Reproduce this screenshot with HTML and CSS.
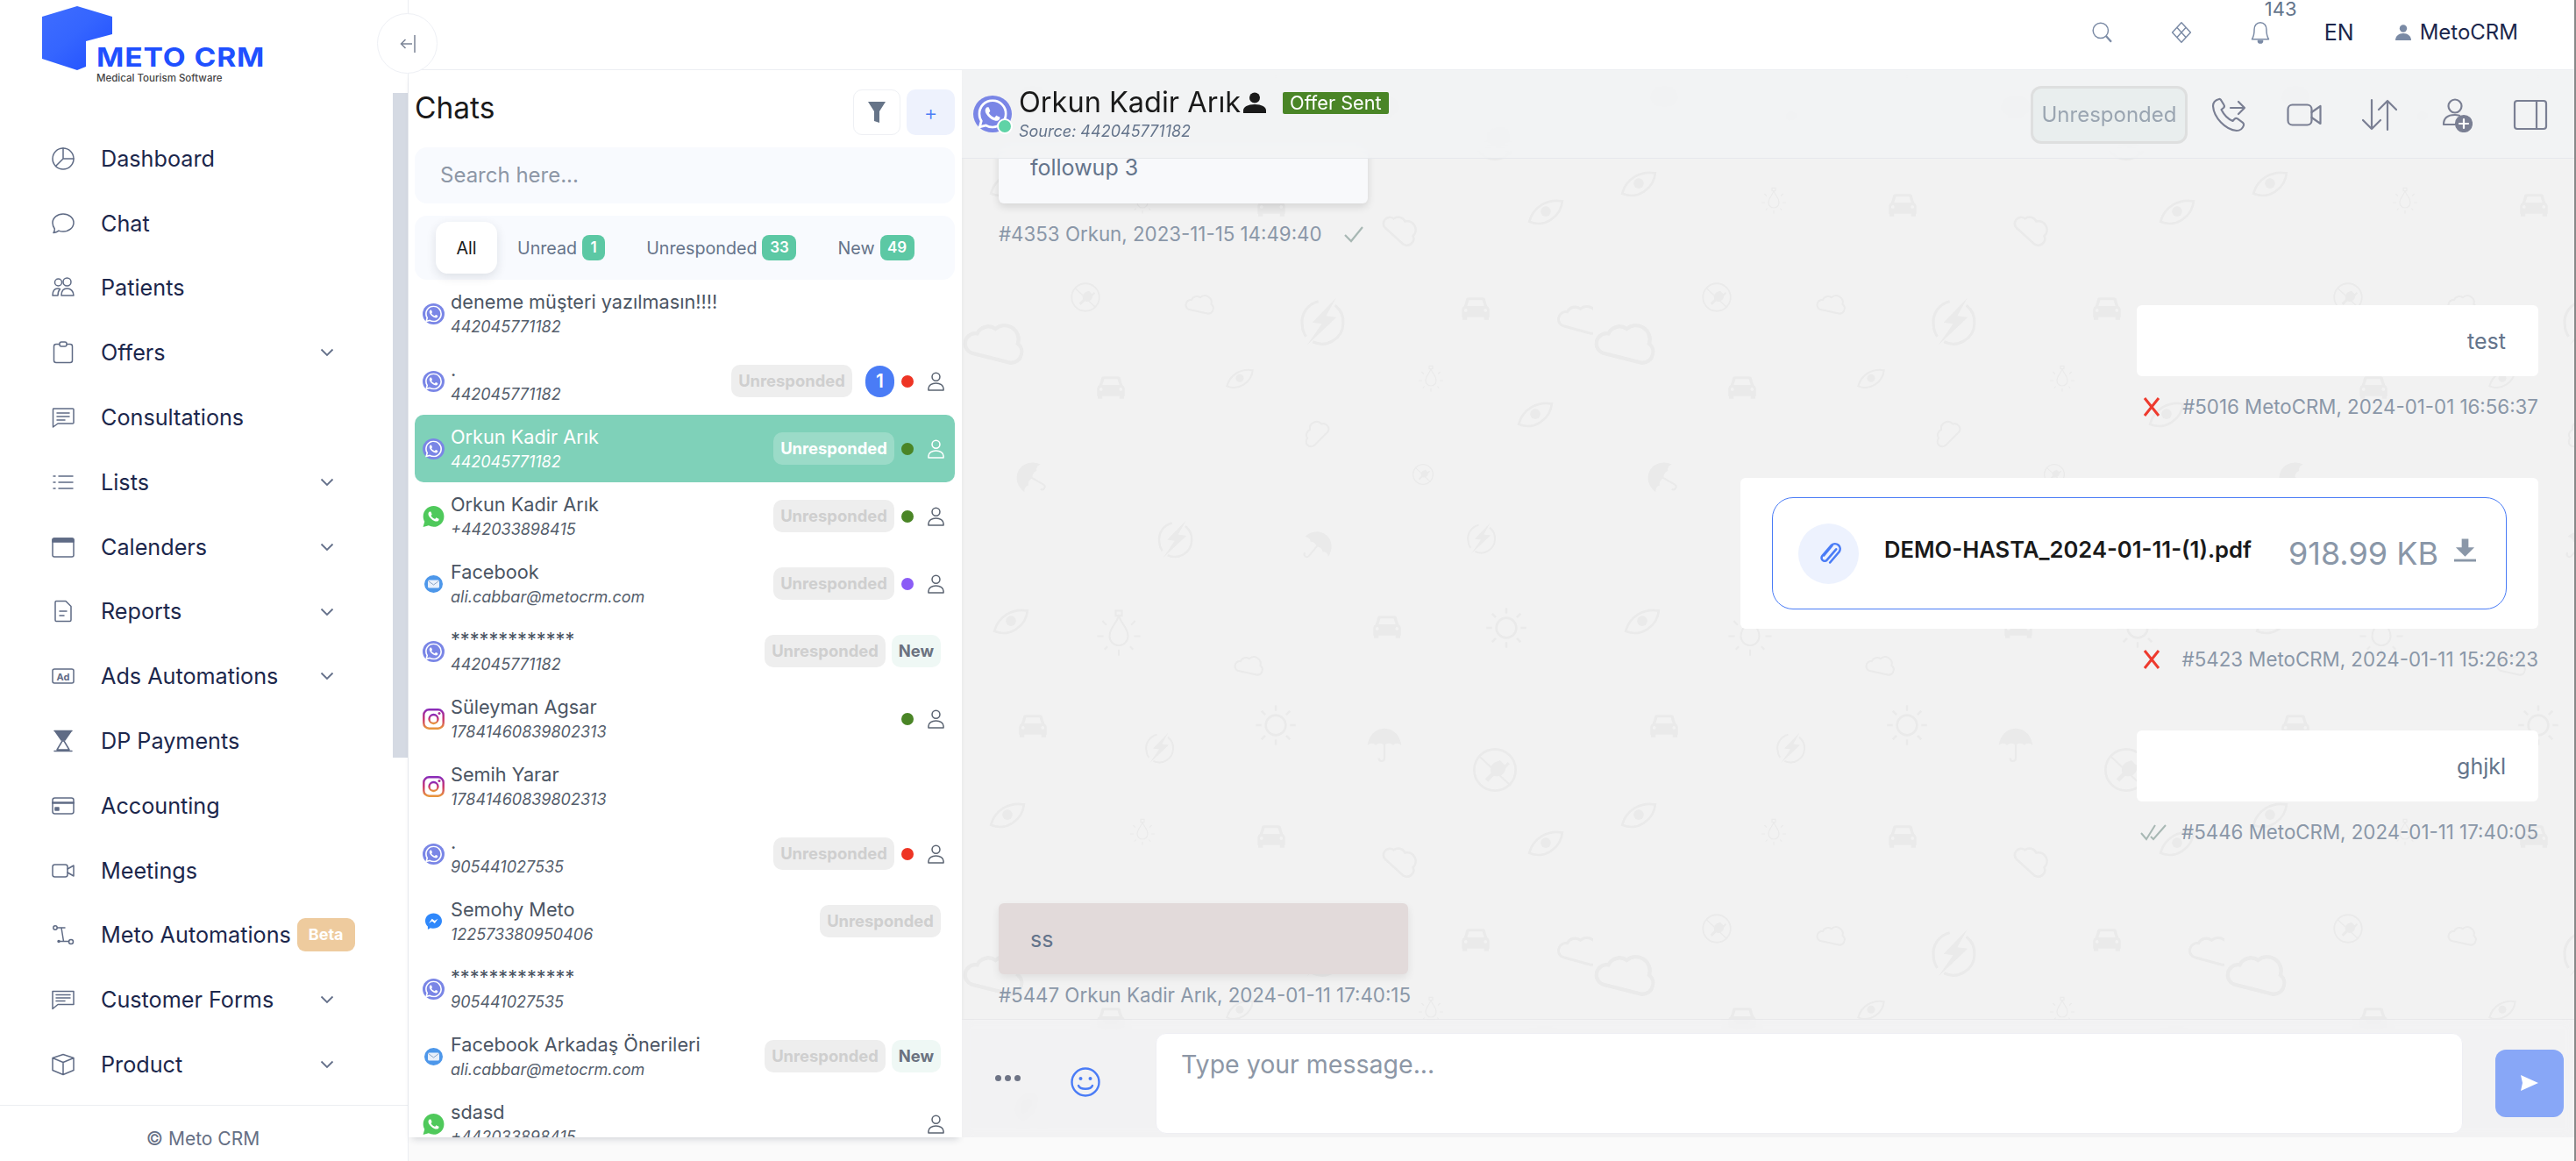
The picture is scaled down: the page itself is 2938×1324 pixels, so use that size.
FILE: index.html
```html
<!DOCTYPE html>
<html lang="en">
<head>
<meta charset="utf-8">
<title>Meto CRM</title>
<link rel="stylesheet" href="styles.css">
</head>
<body>
<svg class="defs" aria-hidden="true">
  <defs>
    <linearGradient id="cubeGrad" x1="0" y1="0" x2="1" y2="1"><stop offset="0" stop-color="#3f6dff"/><stop offset=".45" stop-color="#3565ff"/><stop offset="1" stop-color="#1f4dff"/></linearGradient>
    <linearGradient id="igGrad" x1="0" y1="0" x2="0" y2="1"><stop offset="0" stop-color="#8a2bb8"/><stop offset=".5" stop-color="#c9316e"/><stop offset="1" stop-color="#e8953c"/></linearGradient>
    <symbol id="wa-phone" viewBox="0 0 24 24"><path d="M17.472 14.382c-.297-.149-1.758-.867-2.03-.967-.273-.099-.471-.148-.67.15-.197.297-.767.966-.94 1.164-.173.199-.347.223-.644.075-.297-.15-1.255-.463-2.39-1.475-.883-.788-1.48-1.761-1.653-2.059-.173-.297-.018-.458.13-.606.134-.133.298-.347.446-.52.149-.174.198-.298.298-.497.099-.198.05-.371-.025-.52-.075-.149-.669-1.612-.916-2.207-.242-.579-.487-.5-.669-.51-.173-.008-.371-.01-.57-.01-.198 0-.52.074-.792.372-.272.297-1.04 1.016-1.04 2.479 0 1.462 1.065 2.875 1.213 3.074.149.198 2.096 3.2 5.077 4.487.709.306 1.262.489 1.694.625.712.227 1.36.195 1.871.118.571-.085 1.758-.719 2.006-1.413.248-.694.248-1.289.173-1.413-.074-.124-.272-.198-.57-.347"/></symbol>
    <symbol id="wa-ring" viewBox="0 0 24 24"><path d="M12.051 21.785h-.004a9.87 9.87 0 01-5.031-1.378l-.361-.214-3.741.982.998-3.648-.235-.374a9.86 9.86 0 01-1.51-5.26c.001-5.45 4.436-9.884 9.888-9.884 2.64 0 5.122 1.03 6.988 2.898a9.825 9.825 0 012.893 6.994c-.003 5.45-4.437 9.884-9.885 9.884m8.413-18.297A11.815 11.815 0 0012.05 0C5.495 0 .16 5.335.157 11.892c0 2.096.547 4.142 1.588 5.945L.057 24l6.305-1.654a11.882 11.882 0 005.683 1.448h.005c6.554 0 11.89-5.335 11.893-11.893a11.821 11.821 0 00-3.48-8.413z"/></symbol>
    <symbol id="ch-viber" viewBox="0 0 25 24"><ellipse cx="12.500" cy="12" rx="12.500" ry="12" fill="#7a86e6"/><use href="#wa-ring" x="3" y="2.500" width="19" height="19" fill="#fff"/><use href="#wa-phone" x="3" y="2.500" width="19" height="19" fill="#fff"/></symbol>
    <symbol id="ch-whats" viewBox="0 0 24 24"><path fill="#4fc95b" d="M12.050 0C5.500 0 .16 5.340.16 11.890c0 2.100.55 4.140 1.590 5.950L.06 24l6.300-1.650a11.880 11.880 0 005.690 1.450c6.550 0 11.890-5.340 11.890-11.900C23.940 5.340 18.600 0 12.050 0z"/><use href="#wa-phone" width="24" height="24" fill="#fff"/></symbol>
    <symbol id="ch-mail" viewBox="0 0 25 24"><ellipse cx="12.500" cy="12" rx="10.500" ry="10" fill="#4d97ea"/><rect x="6" y="7.500" width="13" height="9" rx="1.500" fill="#e8f0fb"/><path d="M6.500 8.500l6 4.500 6-4.500" fill="none" stroke="#8ea6c6" stroke-width="1"/></symbol>
    <symbol id="ch-ig" viewBox="0 0 25 24"><rect x="1.300" y="1.300" width="22.400" height="21.400" rx="6" fill="none" stroke="url(#igGrad)" stroke-width="2.400"/><circle cx="12.500" cy="12" r="5" fill="none" stroke="url(#igGrad)" stroke-width="2.300"/><circle cx="19" cy="5.500" r="1.500" fill="#a72b96"/></symbol>
    <symbol id="ch-msg" viewBox="0 0 24 24"><path fill="#2f88fb" d="M12 2.500C6.500 2.500 2.500 6.400 2.500 11.300c0 2.600 1.100 4.800 2.900 6.300v3.300l3.100-1.700c1.100.4 2.300.6 3.500.6 5.500 0 9.500-3.900 9.500-8.500S17.500 2.500 12 2.500z"/><path fill="#fff" d="M6.500 14l3.700-5.300 3 2.400 3.800-2.400-3.700 5.300-3-2.400z"/></symbol>
    <symbol id="ic-person" viewBox="0 0 20 24"><circle cx="10" cy="6.500" r="4.700" fill="none" stroke="currentColor" stroke-width="1.600"/><path d="M1 22.500v-2c0-4 4-6.500 9-6.500s9 2.500 9 6.500v2z" fill="none" stroke="currentColor" stroke-width="1.600" stroke-linejoin="round"/></symbol>
    <symbol id="ic-chev" viewBox="0 0 16 10"><path d="M1.500 1.500L8 8l6.500-6.500" fill="none" stroke="#64708a" stroke-width="1.800"/></symbol>
    <symbol id="ic-x" viewBox="0 0 20 22"><path d="M2 1l16 20M18 1L2 21" fill="none" stroke="#ee3a2e" stroke-width="3"/></symbol>
    <symbol id="d-car" viewBox="0 0 48 48"><path fill-rule="evenodd" d="M13 7h22c2 0 3 1 3.500 2.500L41.500 20c2 1 3.500 3 3.500 6v11h-1v4h-7v-4H11v4H4v-4H3V26c0-3 1.500-5 3.500-6l3-10.500C10 8 11 7 13 7zm1 4l-3 9h26l-3-9zM9 24a2.500 2.500 0 100 5 2.500 2.500 0 000-5zm30 0a2.500 2.500 0 100 5 2.500 2.500 0 000-5z"/></symbol>
    <symbol id="d-eye" viewBox="0 0 48 40"><path d="M3 32C8 13 26 3 45 6 43 26 22 40 3 32z" fill="none" stroke="currentColor" stroke-width="3"/><circle cx="24" cy="19" r="6.500"/></symbol>
    <symbol id="d-cloud" viewBox="0 0 48 40"><path d="M10 35a8 8 0 01-1-16 9.500 9.500 0 0113-7 11 11 0 0120 7 8.500 8.500 0 01-2 16z" fill="none" stroke="currentColor" stroke-width="3"/></symbol>
    <symbol id="d-sun" viewBox="0 0 48 48"><circle cx="24" cy="24" r="10.500" fill="none" stroke="currentColor" stroke-width="2.400"/><path d="M24 3v6M24 39v6M3 24h6M39 24h6M9 9l4 4M35 35l4 4M39 9l-4 4M13 35l-4 4" fill="none" stroke="currentColor" stroke-width="2.400"/></symbol>
    <symbol id="d-bulb" viewBox="0 0 48 48"><path d="M24 6c1 8 9 12 9 21a9 9 0 01-18 0c0-9 8-13 9-21z" fill="none" stroke="currentColor" stroke-width="1.800"/><path d="M21 2h6v5h-6zM3 27h6M39 27h6M8 12l4 4M40 12l-4 4M10 40l3-3M38 40l-3-3M24 40v6" fill="none" stroke="currentColor" stroke-width="1.800"/></symbol>
    <symbol id="d-bolt" viewBox="0 0 48 48"><path d="M17 5.500A20 20 0 005 30a20 20 0 005 10M33 7a20 20 0 0110 16 20 20 0 01-26 21" fill="none" stroke="currentColor" stroke-width="2.600"/><path d="M33 0L14 26h9L12 48l24-30h-10z"/></symbol>
    <symbol id="d-plug" viewBox="0 0 48 48"><circle cx="24" cy="24" r="21" fill="none" stroke="currentColor" stroke-width="2.400"/><path d="M8 10l32 30" stroke="currentColor" stroke-width="2"/><path d="M29 14l5 5 3-3 2 2-4 4a9 9 0 01-12 8l-6 6-3-3 6-6a9 9 0 018-12z"/></symbol>
    <symbol id="d-umb" viewBox="0 0 48 48"><path d="M24 4C12 4 4 14 3 25c3-3 8-3 10 0 3-3 8-3 11 0 3-3 8-3 11 0 2-3 7-3 10 0C44 14 36 4 24 4z"/><path d="M24 24v17c0 5-7 5-7 0" fill="none" stroke="currentColor" stroke-width="2.400"/></symbol>
    <pattern id="doodlePattern" width="720" height="720" patternUnits="userSpaceOnUse">
      <g fill="#eaeaea" color="#eaeaea">
        <use href="#d-plug" x="123" y="241" width="36" height="36"/>
        <use href="#d-cloud" x="255" y="251" width="34" height="28" transform="rotate(12 272 265)"/>
        <use href="#d-bolt" x="383" y="258" width="58" height="58" transform="rotate(8 412 287)"/>
        <use href="#d-car" x="568" y="254" width="36" height="36"/>
        <use href="#d-cloud" x="680" y="260" width="50" height="42" transform="rotate(15 706 282)"/>
        <use href="#d-cloud" x="3" y="278" width="70" height="58" transform="rotate(14 38 308)"/>
        <use href="#d-car" x="152" y="344" width="36" height="36"/>
        <use href="#d-eye" x="300" y="338" width="34" height="28"/>
        <use href="#d-bulb" x="519" y="336" width="32" height="32"/>
        <use href="#d-eye" x="632" y="375" width="44" height="36"/>
        <use href="#d-cloud" x="385" y="399" width="34" height="28" transform="rotate(-45 402 413)"/>
        <use href="#d-umb" x="59" y="444" width="42" height="42" transform="rotate(-60 80 465)"/>
        <use href="#d-plug" x="513" y="448" width="26" height="26"/>
        <use href="#d-bolt" x="221" y="512" width="46" height="46" transform="rotate(8 244 535)"/>
        <use href="#d-umb" x="385" y="523" width="40" height="40" transform="rotate(40 405 543)"/>
        <use href="#d-bolt" x="574" y="515" width="38" height="38" transform="rotate(8 593 534)"/>
        <use href="#d-eye" x="34" y="611" width="44" height="36"/>
        <use href="#d-bulb" x="151" y="614" width="56" height="56"/>
        <use href="#d-car" x="467" y="617" width="36" height="36"/>
        <use href="#d-sun" x="595" y="610" width="52" height="52"/>
        <use href="#d-cloud" x="311" y="663" width="34" height="28" transform="rotate(12 328 677)"/>
        <use href="#d-car" x="63" y="10" width="36" height="36"/>
        <use href="#d-bolt" x="207" y="34" width="38" height="38" transform="rotate(8 226 53)"/>
        <use href="#d-sun" x="332" y="1" width="52" height="52"/>
        <use href="#d-umb" x="460" y="27" width="44" height="44"/>
        <use href="#d-plug" x="581" y="51" width="54" height="54"/>
        <use href="#d-eye" x="30" y="112" width="44" height="36"/>
        <use href="#d-bulb" x="190" y="133" width="32" height="32"/>
        <use href="#d-car" x="335" y="136" width="36" height="36"/>
        <use href="#d-cloud" x="480" y="161" width="44" height="36" transform="rotate(42 502 179)"/>
        <use href="#d-eye" x="644" y="144" width="44" height="36"/>
      </g>
    </pattern>
  </defs>
</svg>

<div class="app">
  <aside class="sidebar">
    <div class="logo">
      <svg class="logo-cube" viewBox="0 0 80 73"><path fill="url(#cubeGrad)" d="M0 12L40 0l40 12v20l-30 8v29l-10 4L0 60z"/></svg>
      <div class="logo-text">
        <div class="logo-name">METO CRM</div>
        <div class="logo-sub">Medical Tourism Software</div>
      </div>
    </div>
    <nav class="nav">
      <a class="nav-item"><svg class="nav-ic" viewBox="0 0 26 26"><circle cx="13" cy="13" r="12"/><path d="M13 1v12h12M13 13l-8.500 8.500"/></svg><span>Dashboard</span></a>
      <a class="nav-item"><svg class="nav-ic" viewBox="0 0 26 26"><path d="M13 2c6.600 0 12 4.300 12 10s-5.400 10-12 10c-1.800 0-3.500-.3-5-.9-1.600 1.300-3.500 2.300-6 2.400 1-1.500 1.400-3 1.300-4.500C1.900 17 1 14.700 1 12 1 6.300 6.400 2 13 2z"/></svg><span>Chat</span></a>
      <a class="nav-item"><svg class="nav-ic" viewBox="0 0 26 26"><circle cx="7.500" cy="7" r="4"/><circle cx="17.500" cy="6.500" r="4.500"/><path d="M1 22c0-5 2-8 6-8 1 0 2 .2 2.500.6C7.500 16.500 7 19 7 22zM11 22c0-5 2.500-8 6.500-8s7.500 3 7.500 8z"/></svg><span>Patients</span></a>
      <a class="nav-item has-sub"><svg class="nav-ic" viewBox="0 0 26 26"><rect x="2.500" y="3.500" width="21" height="21" rx="2.500"/><rect x="9" y="1" width="8" height="5" rx="2" fill="#fff"/></svg><span>Offers</span><svg class="chev"><use href="#ic-chev"/></svg></a>
      <a class="nav-item"><svg class="nav-ic" viewBox="0 0 26 26"><path d="M2 3h22a1 1 0 011 1v15a1 1 0 01-1 1H7l-5.500 4V4a1 1 0 01.500-1zM6 8h14M6 12h14M6 16h9"/></svg><span>Consultations</span></a>
      <a class="nav-item has-sub"><svg class="nav-ic" viewBox="0 0 26 26"><path d="M8 6h16M8 13h16M8 20h16M2 6h2M2 13h2M2 20h2"/></svg><span>Lists</span><svg class="chev"><use href="#ic-chev"/></svg></a>
      <a class="nav-item has-sub"><svg class="nav-ic" viewBox="0 0 26 26"><rect x="1" y="3" width="24" height="21" rx="2"/><path class="nav-fill" d="M1 5a2 2 0 012-2h20a2 2 0 012 2v2H1z"/></svg><span>Calenders</span><svg class="chev"><use href="#ic-chev"/></svg></a>
      <a class="nav-item has-sub"><svg class="nav-ic" viewBox="0 0 26 26"><path d="M5 1.500h11l6 6V23a1.500 1.500 0 01-1.500 1.500h-15.500A1.500 1.500 0 014 23V3a1.500 1.500 0 011-1.500zM9 13h8M9 18h5"/></svg><span>Reports</span><svg class="chev"><use href="#ic-chev"/></svg></a>
      <a class="nav-item has-sub"><svg class="nav-ic" viewBox="0 0 26 18"><rect x="1" y="1" width="24" height="16" rx="2"/><text class="ad-text" x="13" y="13.500">Ad</text></svg><span>Ads Automations</span><svg class="chev"><use href="#ic-chev"/></svg></a>
      <a class="nav-item"><svg class="nav-ic" viewBox="0 0 26 26"><path class="nav-fill" d="M4 2h18l-7 10h-4z"/><path d="M3 1.500h20M3 24.500h20M6 23l6-10h2l6 10z"/></svg><span>DP Payments</span></a>
      <a class="nav-item"><svg class="nav-ic" viewBox="0 0 26 20"><rect x="1" y="1" width="24" height="18" rx="2.500"/><path d="M1 6.500h24" stroke-width="2.400"/><rect class="nav-fill" x="4" y="12" width="4" height="3"/></svg><span>Accounting</span></a>
      <a class="nav-item"><svg class="nav-ic" viewBox="0 0 26 20"><rect x="1" y="3" width="17" height="14" rx="2.500"/><path d="M18 8l7-4v12l-7-4"/></svg><span>Meetings</span></a>
      <a class="nav-item"><svg class="nav-ic" viewBox="0 0 26 26"><circle cx="4" cy="5" r="2.200"/><circle cx="22" cy="21" r="2.500"/><circle cx="8" cy="20.500" r="1" class="nav-fill"/><path d="M6.500 5H15M11 5l2.500 15.500M8 20.500h11.500"/></svg><span>Meto Automations</span><span class="beta">Beta</span></a>
      <a class="nav-item has-sub"><svg class="nav-ic" viewBox="0 0 26 26"><path d="M1 3.500h24v15H7l-6 5zM5 7.500h16M5 11h16M5 14.500h10"/></svg><span>Customer Forms</span><svg class="chev"><use href="#ic-chev"/></svg></a>
      <a class="nav-item has-sub"><svg class="nav-ic" viewBox="0 0 26 26"><path d="M13 1.500l12 4v14l-12 5-12-5v-14zM1 5.500l12 5 12-5M13 10.500v14"/></svg><span>Product</span><svg class="chev"><use href="#ic-chev"/></svg></a>
    </nav>
    <footer class="side-foot">© Meto CRM</footer>
    <div class="side-thumb"></div>
  </aside>

  <div class="main">
    <button class="collapse"><svg viewBox="0 0 18 22"><path d="M14 11H1.500M6.500 6l-5 5 5 5" fill="none" stroke="#7b8496" stroke-width="1.500"/><path d="M17 1v20" stroke="#7b8496" stroke-width="1.500"/></svg></button>
    <header class="topbar">
      <svg class="top-ic" viewBox="0 0 30 30"><circle cx="12.500" cy="12.500" r="10"/><path d="M19.500 19.500l7 8" stroke-width="2.600"/></svg>
      <svg class="top-ic" viewBox="0 0 30 30"><path d="M15 2l12 13-12 13L3 15zM9 8.500l12 13M21 8.500L9 21.500"/></svg>
      <div class="bell-wrap"><svg class="top-ic" viewBox="0 0 30 30"><path d="M15 2c-5 0-8 4-8 9 0 6-.5 9-3 13h22c-2.500-4-3-7-3-13 0-5-3-9-8-9z"/><path class="top-fill" d="M12 26h6a3 3 0 01-6 0z"/></svg><span class="bell-count">143</span></div>
      <span class="lang">EN</span>
      <div class="user"><svg class="user-ic" viewBox="0 0 18 18"><circle cx="9" cy="4.500" r="4.200"/><path d="M0 18c0-5 4-8 9-8s9 3 9 8z"/></svg><span>MetoCRM</span></div>
    </header>

    <div class="content">
      <section class="chats">
        <div class="chats-head">
          <h1 class="chats-title">Chats</h1>
          <button class="btn-filter"><svg viewBox="0 0 20 24"><path d="M0 0h20l-7 11v13l-6-2V11z"/></svg></button>
          <button class="btn-plus">+</button>
        </div>
        <div class="search">Search here...</div>
        <div class="tabs">
          <span class="tab tab-active">All</span>
          <span class="tab tab-unread">Unread<b class="count">1</b></span>
          <span class="tab tab-unresp">Unresponded<b class="count">33</b></span>
          <span class="tab tab-new">New<b class="count">49</b></span>
        </div>
        <div class="rows">
          <div class="row"><svg class="ch"><use href="#ch-viber"/></svg><div class="row-text"><div class="row-name">deneme müşteri yazılmasın!!!!</div><div class="row-sub">442045771182</div></div></div>
          <div class="row"><svg class="ch"><use href="#ch-viber"/></svg><div class="row-text"><div class="row-name">.</div><div class="row-sub">442045771182</div></div><div class="row-end"><span class="pill">Unresponded</span><span class="unread">1</span><i class="dot red"></i><svg class="person"><use href="#ic-person"/></svg></div></div>
          <div class="row row-sel"><svg class="ch"><use href="#ch-viber"/></svg><div class="row-text"><div class="row-name">Orkun Kadir Arık</div><div class="row-sub">442045771182</div></div><div class="row-end"><span class="pill">Unresponded</span><i class="dot green"></i><svg class="person"><use href="#ic-person"/></svg></div></div>
          <div class="row"><svg class="ch"><use href="#ch-whats"/></svg><div class="row-text"><div class="row-name">Orkun Kadir Arık</div><div class="row-sub">+442033898415</div></div><div class="row-end"><span class="pill">Unresponded</span><i class="dot green"></i><svg class="person"><use href="#ic-person"/></svg></div></div>
          <div class="row"><svg class="ch"><use href="#ch-mail"/></svg><div class="row-text"><div class="row-name">Facebook</div><div class="row-sub">ali.cabbar@metocrm.com</div></div><div class="row-end"><span class="pill">Unresponded</span><i class="dot purple"></i><svg class="person"><use href="#ic-person"/></svg></div></div>
          <div class="row"><svg class="ch"><use href="#ch-viber"/></svg><div class="row-text"><div class="row-name">*************</div><div class="row-sub">442045771182</div></div><div class="row-end"><span class="pill">Unresponded</span><span class="new">New</span></div></div>
          <div class="row"><svg class="ch"><use href="#ch-ig"/></svg><div class="row-text"><div class="row-name">Süleyman Agsar</div><div class="row-sub">17841460839802313</div></div><div class="row-end"><i class="dot green"></i><svg class="person"><use href="#ic-person"/></svg></div></div>
          <div class="row"><svg class="ch"><use href="#ch-ig"/></svg><div class="row-text"><div class="row-name">Semih Yarar</div><div class="row-sub">17841460839802313</div></div></div>
          <div class="row"><svg class="ch"><use href="#ch-viber"/></svg><div class="row-text"><div class="row-name">.</div><div class="row-sub">905441027535</div></div><div class="row-end"><span class="pill">Unresponded</span><i class="dot red"></i><svg class="person"><use href="#ic-person"/></svg></div></div>
          <div class="row"><svg class="ch"><use href="#ch-msg"/></svg><div class="row-text"><div class="row-name">Semohy Meto</div><div class="row-sub">122573380950406</div></div><div class="row-end"><span class="pill">Unresponded</span></div></div>
          <div class="row"><svg class="ch"><use href="#ch-viber"/></svg><div class="row-text"><div class="row-name">*************</div><div class="row-sub">905441027535</div></div></div>
          <div class="row"><svg class="ch"><use href="#ch-mail"/></svg><div class="row-text"><div class="row-name">Facebook Arkadaş Önerileri</div><div class="row-sub">ali.cabbar@metocrm.com</div></div><div class="row-end"><span class="pill">Unresponded</span><span class="new">New</span></div></div>
          <div class="row"><svg class="ch"><use href="#ch-whats"/></svg><div class="row-text"><div class="row-name">sdasd</div><div class="row-sub">+442033898415</div></div><div class="row-end"><svg class="person"><use href="#ic-person"/></svg></div></div>
        </div>
      </section>

      <section class="chat">
        <svg class="doodles" aria-hidden="true"><rect width="100%" height="100%" fill="url(#doodlePattern)"/></svg>
        <header class="chat-head">
          <div class="avatar"><svg class="avatar-ic"><use href="#ch-viber"/></svg><i class="online"></i></div>
          <div class="head-text">
            <div class="head-name"><span>Orkun Kadir Arık</span><svg class="head-person" viewBox="0 0 26 24"><circle cx="13" cy="6.500" r="6"/><path d="M0 24v-3c0-4 5-7 13-7s13 3 13 7v3z"/></svg><span class="offer">Offer Sent</span></div>
            <div class="head-src">Source: 442045771182</div>
          </div>
          <div class="head-actions">
            <span class="status">Unresponded</span>
            <svg class="act" viewBox="0 0 40 40"><path d="M9 2c-4 1-7 4-7 8 1 13 14 27 27 28 4 0 7-3 8-6 .5-1.500-.2-2.500-1-3.200l-6-4.500c-1.200-.8-2.500-.6-3.500.4l-2 2.300c-6-2.500-10-7-13-13l2.500-2c1-1 1.200-2.300.4-3.500L11 3c-.5-.7-1.200-1.200-2-1z"/><path d="M22 12h16M31 5l7 7-7 7"/></svg>
            <svg class="act" viewBox="0 0 40 26"><rect x="1.500" y="1.500" width="27" height="23" rx="5"/><path d="M28.500 10l10-7v20l-10-7"/></svg>
            <svg class="act" viewBox="0 0 40 36"><path d="M11 1v33M1 24l10 10 10-10M29 35V2M19 12L29 2l10 10"/></svg>
            <svg class="act" viewBox="0 0 40 40"><circle cx="20" cy="10" r="7.500"/><path d="M7 31c0-7 4-11 13-11 2 0 3 .2 5 .7M7 31h14"/><circle cx="30" cy="30" r="9" class="act-fill"/><path d="M30 25v10M25 30h10" class="act-plus"/></svg>
            <svg class="act" viewBox="0 0 40 36"><rect x="2" y="2" width="36" height="32" rx="3"/><path d="M27 2v32"/></svg>
          </div>
        </header>

        <div class="messages">
          <div class="msg msg-in msg-first">
            <div class="bubble bubble-first">followup 3</div>
            <div class="meta">#4353 Orkun, 2023-11-15 14:49:40<svg class="tick" viewBox="0 0 24 20"><path d="M2 11l7 7L22 2"/></svg></div>
          </div>
          <div class="msg msg-out">
            <div class="bubble bubble-out">test</div>
            <div class="meta meta-out"><svg class="fail"><use href="#ic-x"/></svg>#5016 MetoCRM, 2024-01-01 16:56:37</div>
          </div>
          <div class="msg msg-out">
            <div class="bubble-file">
              <div class="file">
                <span class="file-ic"><svg viewBox="0 0 24 24"><path d="M19 8L10 18.500a3 3 0 01-4.500-4L14.500 4a5 5 0 017.500 6.500L13 21M15 4.500L7 14"/></svg></span>
                <span class="file-name">DEMO-HASTA_2024-01-11-(1).pdf</span>
                <span class="file-size">918.99 KB</span>
                <svg class="file-dl" viewBox="0 0 26 28"><path d="M9 0h8v10h7L13 21 2 10h7z"/><rect x="0" y="24" width="26" height="3"/></svg>
              </div>
            </div>
            <div class="meta meta-out"><svg class="fail"><use href="#ic-x"/></svg>#5423 MetoCRM, 2024-01-11 15:26:23</div>
          </div>
          <div class="msg msg-out">
            <div class="bubble bubble-out">ghjkl</div>
            <div class="meta meta-out"><svg class="dbl" viewBox="0 0 30 20"><path d="M1 11l6 7L17 2M12 15l3 3L29 2"/></svg>#5446 MetoCRM, 2024-01-11 17:40:05</div>
          </div>
          <div class="msg msg-in">
            <div class="bubble bubble-pink">ss</div>
            <div class="meta meta-tight">#5447 Orkun Kadir Arık, 2024-01-11 17:40:15</div>
          </div>
        </div>

        <footer class="composer">
          <span class="dots"><i></i><i></i><i></i></span>
          <svg class="emoji" viewBox="0 0 34 34"><circle cx="17" cy="17" r="15.500"/><circle class="emoji-eye" cx="11.500" cy="13" r="2"/><circle class="emoji-eye" cx="22.500" cy="13" r="2"/><path d="M9 21c2 5 14 5 16 0"/></svg>
          <div class="input">Type your message...</div>
          <button class="send"><svg viewBox="0 0 20 18"><path d="M0 0l20 9L0 18l2-9z"/></svg></button>
        </footer>
      </section>
    </div>
    <div class="strip"></div>
  </div>
</div>
</body>
</html>
```
FILE: styles.css
```css
* { box-sizing: border-box; }
html, body { margin: 0; padding: 0; height: 100%; }
body { font-family: "Inter", "Liberation Sans", sans-serif; background: #fff; overflow: hidden; color: #1e293b; }
i { font-style: normal; }
button { border: 0; padding: 0; font: inherit; }
.defs { position: absolute; width: 0; height: 0; }
.app { display: flex; height: 1324px; width: 2938px; }

/* sidebar */
.sidebar { width: 466px; flex: none; height: 100%; border-right: 1px solid #eceef2; position: relative; display: flex; flex-direction: column; background: #fff; }
.logo { height: 144px; padding: 7px 0 0 48px; display: flex; align-items: flex-start; flex: none; }
.logo-cube { width: 80px; height: 73px; flex: none; }
.logo-text { margin-left: -18px; padding-top: 43px; }
.logo-name { font-size: 30px; line-height: 30px; font-weight: 700; color: #1f50ff; letter-spacing: 0.8px; white-space: nowrap; transform: scaleX(1.12); transform-origin: 0 50%; }
.logo-sub { font-size: 11.5px; line-height: 16px; color: #444; font-weight: 500; margin-top: 1px; white-space: nowrap; }
.nav { flex: 1; }
.nav-item { height: 73.8px; display: flex; align-items: center; padding-left: 59px; font-size: 25.200px; color: #1c274c; white-space: nowrap; position: relative; }
.nav-ic { width: 26px; height: 26px; flex: none; margin-right: 30px; fill: none; stroke: #5f6b85; stroke-width: 1.5; stroke-linejoin: round; stroke-linecap: round; }
.nav-fill { fill: #5f6b85; stroke: #5f6b85; }
.ad-text { font: 700 11px "Inter", sans-serif; fill: #5f6b85; stroke: none; text-anchor: middle; }
.chev { width: 16px; height: 10px; position: absolute; left: 365px; top: 32px; }
.beta { margin-left: 7px; background: #eecb9e; color: #fff; font-weight: 700; font-size: 18px; line-height: 38px; height: 38px; padding: 0 13px; border-radius: 9px; }
.side-foot { height: 64px; flex: none; border-top: 1px solid #eceef2; text-align: center; font-size: 21px; line-height: 76px; color: #667085; padding-right: 2px; }
.side-thumb { position: absolute; left: 448px; top: 106px; width: 17px; height: 758px; background: #d5dae3; }

/* main */
.main { flex: 1; min-width: 0; position: relative; display: flex; flex-direction: column; border-right: 2px solid #888; }
.collapse { position: absolute; left: -36px; top: 15px; width: 69px; height: 69px; border-radius: 50%; background: #fff; border: 1px solid #eef0f5; z-index: 5; display: flex; align-items: center; justify-content: center; }
.collapse svg { width: 18px; height: 22px; }
.topbar { height: 80px; flex: none; display: flex; align-items: center; justify-content: flex-end; padding: 0 64px 6px 0; border-bottom: 1px solid #eceef2; background: #fff; }
.top-ic { width: 26px; height: 26px; fill: none; stroke: #7a8aa5; stroke-width: 1.7; stroke-linejoin: round; margin-right: 64px; flex: none; display: block; }
.top-fill { fill: #7a8aa5; }
.bell-wrap { position: relative; }
.bell-wrap .top-ic { margin-right: 60px; }
.bell-count { position: absolute; left: 18px; top: -27px; font-size: 22px; line-height: 26px; color: #64748b; }
.lang { font-size: 25px; color: #1c274c; margin-right: 47px; }
.user { display: flex; align-items: center; gap: 10px; font-size: 24px; color: #1c274c; }
.user-ic { width: 18px; height: 18px; fill: #7a8aa5; }

.content { height: 1217px; display: flex; flex: none; }
.strip { flex: 1; background: #fafafa; }

/* chats list */
.chats { width: 631px; flex: none; background: #fff; padding: 0 8px 0 7px; overflow: hidden; box-shadow: 0 6px 8px -4px rgba(30, 40, 60, .18); position: relative; z-index: 2; }
.chats-head { height: 88px; display: flex; align-items: flex-start; padding-top: 22px; }
.chats-title { margin: 0 auto 0 0; font-size: 33.500px; line-height: 42px; font-weight: 400; color: #1a1a1a; }
.btn-filter { width: 54px; height: 52px; background: #fff; border: 1px solid #eef0f4; border-radius: 10px; display: flex; align-items: center; justify-content: center; margin-right: 7px; }
.btn-filter svg { width: 20px; height: 24px; fill: #667488; }
.btn-plus { width: 55px; height: 52px; background: #eef2fd; color: #4a7cf6; border-radius: 10px; font-size: 24px; font-weight: 300; }
.search { height: 64px; background: #f8fafe; border-radius: 14px; font-size: 24px; line-height: 64px; padding-left: 29px; color: #8d97a6; }
.tabs { height: 73px; margin-top: 14px; background: #f8fafe; border-radius: 14px; display: flex; align-items: center; font-size: 19.700px; color: #66748a; }
.tab { display: flex; align-items: center; white-space: nowrap; }
.tab-active { margin-left: 24px; width: 70px; height: 59px; background: #fff; color: #1a1a1a; border-radius: 14px; justify-content: center; box-shadow: 0 4px 12px rgba(30, 40, 60, .12); }
.tab-unread { margin-left: 23px; }
.tab-unresp { margin-left: 47px; }
.tab-new { margin-left: 47px; }
.count { margin-left: 6px; min-width: 26px; width: 39px; height: 29px; border-radius: 8px; background: #5cc8a4; color: #fff; font-size: 17px; font-weight: 600; line-height: 29px; text-align: center; }
.tab-unread .count { width: 26px; }
.row { height: 77px; display: flex; align-items: center; padding: 0 16px 0 9px; border-radius: 10px; }
.row-sel { background: #7fd1b9; color: #fff; }
.ch { width: 25px; height: 24px; flex: none; margin-right: 7px; }
.row-text { min-width: 0; white-space: nowrap; padding-top: 2px; }
.row-name { font-size: 21.700px; line-height: 28px; color: #4b5563; }
.row-sub { font-size: 18px; line-height: 30px; font-style: italic; color: #555e6c; }
.row-sel .row-name, .row-sel .row-sub { color: #fff; }
.row-end { margin-left: auto; display: flex; align-items: center; }
.pill { background: #eeeeee; color: #cfcfcf; font-weight: 700; font-size: 18.400px; line-height: 37px; height: 37px; border-radius: 10px; width: 138px; text-align: center; white-space: nowrap; }
.row-sel .pill { background: rgba(255, 255, 255, .22); color: #fff; }
.unread { margin-left: 15px; width: 33px; height: 36px; border-radius: 18px; background: #4a7cf6; color: #fff; font-size: 21px; font-weight: 600; line-height: 36px; text-align: center; }
.dot { width: 14px; height: 14px; border-radius: 50%; margin-left: 8px; }
.red { background: #ee3424; }
.green { background: #4a8526; }
.purple { background: #8b5cf6; }
.person { width: 19px; height: 24px; margin: 0 -4px 0 16px; color: #5b6472; }
.row-sel .person { color: #fff; }
.new { margin-left: 7px; width: 56px; height: 37px; background: #eff8f5; color: #6b7280; border-radius: 10px; font-size: 18.400px; font-weight: 700; line-height: 37px; text-align: center; }

/* chat */
.chat { flex: 1; min-width: 0; position: relative; background: #f2f2f2; display: flex; flex-direction: column; overflow: hidden; }
.doodles { position: absolute; left: 0; top: 0; width: 100%; height: 100%; }
.chat-head { height: 101px; flex: none; position: relative; z-index: 3; display: flex; align-items: flex-start; padding: 0 30px 0 13px; background: rgba(242, 243, 244, .82); backdrop-filter: blur(8px); border-bottom: 1px solid #e6e8ec; }
.avatar { position: relative; width: 44px; height: 44px; margin-top: 28px; flex: none; }
.avatar-ic { width: 44px; height: 44px; display: block; }
.online { position: absolute; right: -1px; bottom: -1px; width: 18px; height: 18px; border-radius: 50%; background: #5fd3a6; border: 2px solid #fff; }
.head-text { margin-left: 8px; padding-top: 19px; white-space: nowrap; }
.head-name { display: flex; align-items: center; font-size: 32.500px; line-height: 36px; color: #1a1a1a; }
.head-person { width: 26px; height: 24px; fill: #1a1a1a; margin-left: 3px; }
.offer { margin-left: 19px; background: #4a8526; color: #fff; font-size: 21.700px; line-height: 25px; height: 25px; padding: 0 8px; border-radius: 2px; }
.head-src { font-size: 18px; line-height: 26px; font-style: italic; color: #64748b; margin-top: 2px; }
.head-actions { margin-left: auto; display: flex; align-items: center; gap: 46px; align-self: center; padding-top: 2px; }
.status { width: 179px; height: 66px; border: 3px solid #dedfdf; border-radius: 12px; background: #e9eeee; color: #9aa5b1; font-size: 24px; line-height: 60px; text-align: center; margin-right: -19px; }
.act { width: 40px; height: 40px; fill: none; stroke: #7a7f93; stroke-width: 2.200; stroke-linejoin: round; stroke-linecap: round; flex: none; }
.act-fill { fill: #7a7f93; }
.act-plus { stroke: #fff; }

.messages { flex: 1; min-height: 0; position: relative; z-index: 1; padding: 0 41px 0 42px; }
.msg { display: flex; flex-direction: column; margin-bottom: 66px; }
.msg-out { align-items: flex-end; }
.msg-first { margin-top: -18px; }
.msg-in { align-items: flex-start; }
.bubble { height: 81px; font-size: 25px; color: #64748b; background: #fff; border-radius: 6px; display: flex; align-items: center; padding: 0 37px; }
.bubble-first { width: 421px; height: 69px; background: #f8f9fb; box-shadow: 0 4px 10px rgba(0, 0, 0, .12); align-items: flex-start; padding: 12px 36px 0; line-height: 32px; }
.bubble-out { width: 458px; justify-content: flex-end; }
.bubble-pink { width: 467px; background: #e2dada; box-shadow: 0 4px 10px rgba(0, 0, 0, .08); padding: 0 36px; }
.meta { margin-top: 20px; font-size: 22.300px; line-height: 30px; color: #8a97a8; display: flex; align-items: center; white-space: nowrap; }
.meta-tight { margin-top: 9px; }
.tick { width: 24px; height: 20px; margin-left: 24px; fill: none; stroke: #a8b8b4; stroke-width: 2.200; }
.fail { width: 20px; height: 22px; margin-right: 25px; }
.dbl { width: 30px; height: 20px; margin-right: 17px; fill: none; stroke: #a8b8b4; stroke-width: 2; }
.bubble-file { width: 910px; height: 172px; background: #fff; border-radius: 6px; padding: 22px 36px; }
.file { height: 128px; border: 1px solid #4a7cf6; border-radius: 24px; display: flex; align-items: center; padding: 0 34px 0 29px; }
.file-ic { width: 69px; height: 69px; border-radius: 50%; background: #edf2fe; display: flex; align-items: center; justify-content: center; flex: none; }
.file-ic svg { width: 28px; height: 30px; fill: none; stroke: #4a7cf6; stroke-width: 2.200; stroke-linecap: round; }
.file-name { margin-left: 29px; font-size: 25.600px; font-weight: 600; color: #1a1a1a; white-space: nowrap; margin-top: -10px; }
.file-size { margin-left: auto; font-size: 36px; color: #8a97a8; white-space: nowrap; }
.file-dl { width: 25px; height: 28px; margin-left: 18px; fill: #8a97a8; margin-top: -6px; }

.composer { height: 135px; flex: none; position: relative; z-index: 3; display: flex; align-items: center; padding: 15px 12px 5px 38px; background: rgba(242, 242, 243, .7); backdrop-filter: blur(6px); border-top: 1px solid #e8e8ea; }
.dots { display: flex; gap: 4px; margin-top: -11px; width: 28px; flex: none; }
.dots i { width: 7px; height: 7px; border-radius: 50%; background: #6e7485; flex: none; }
.emoji { width: 34px; height: 34px; margin-left: 58px; margin-top: -3px; flex: none; fill: none; stroke: #4a7cf6; stroke-width: 2.400; stroke-linecap: round; }
.emoji-eye { fill: #4a7cf6; stroke: none; }
.input { margin-left: 63px; width: 1491px; height: 115px; background: #fff; border: 1px solid #eeeef3; border-radius: 12px; font-size: 28.500px; line-height: 36px; padding: 17px 28px; color: #8d97a6; flex: none; }
.send { margin-left: 37px; width: 78px; height: 77px; background: #88a7f7; border-radius: 12px; display: flex; align-items: center; justify-content: center; flex: none; }
.send svg { width: 20px; height: 18px; fill: #fff; }
```
